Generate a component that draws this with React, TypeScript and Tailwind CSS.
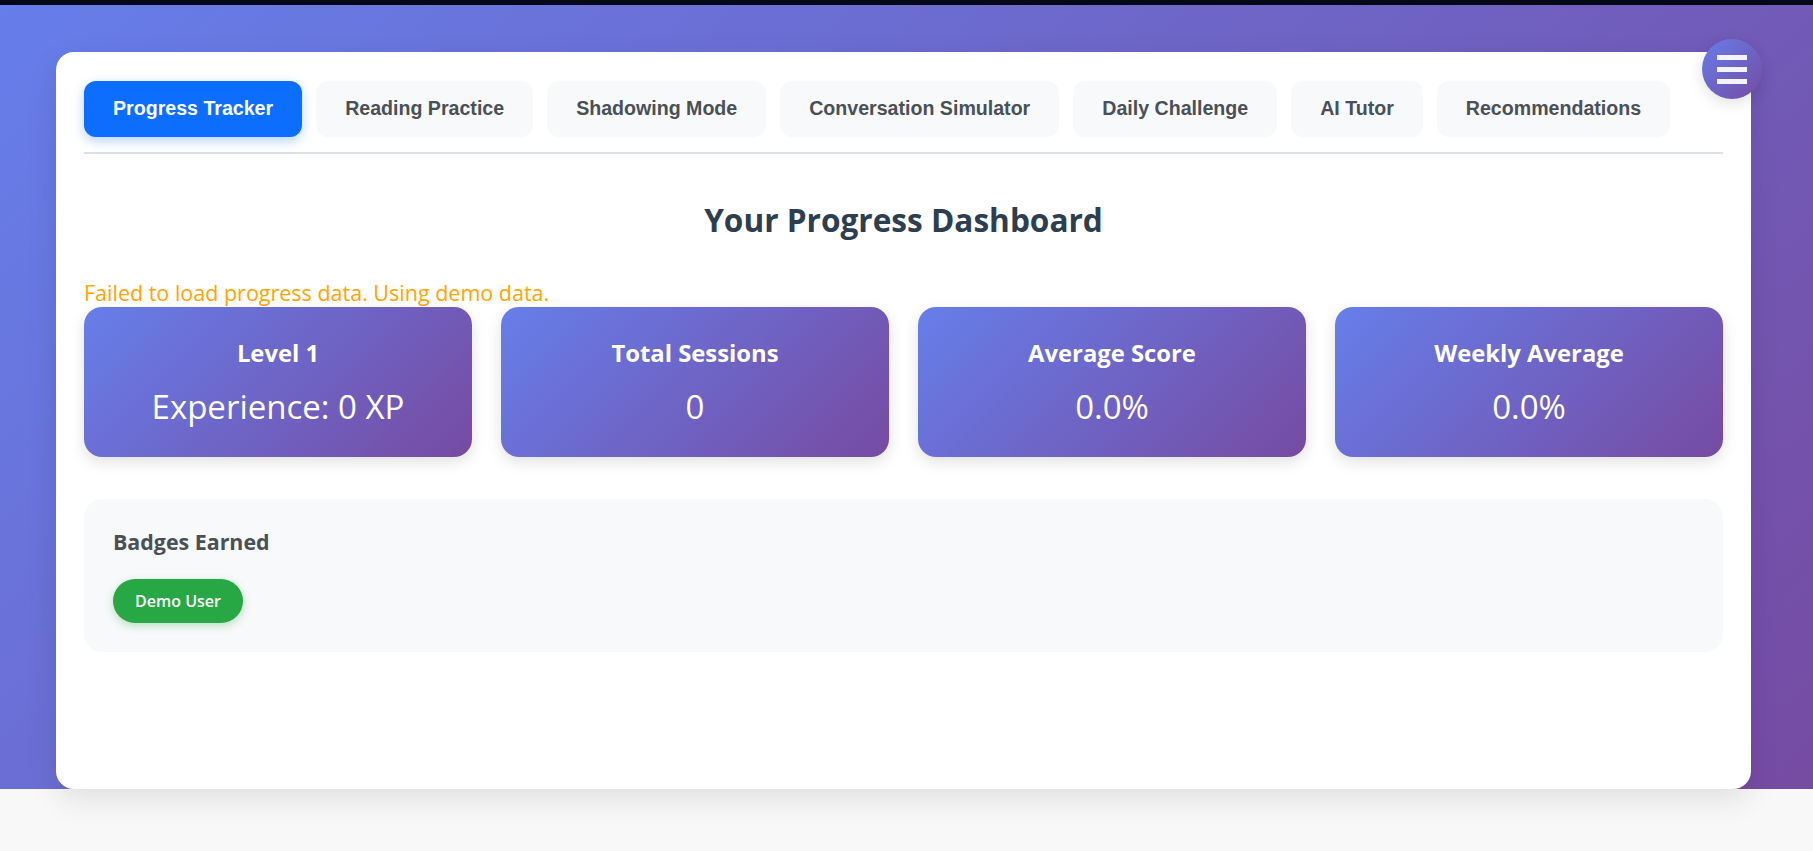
import React from "react";

const tabs = [
  "Progress Tracker",
  "Reading Practice",
  "Shadowing Mode",
  "Conversation Simulator",
  "Daily Challenge",
  "AI Tutor",
  "Recommendations",
];

const stats = [
  { title: "Level 1", value: "Experience: 0 XP" },
  { title: "Total Sessions", value: "0" },
  { title: "Average Score", value: "0.0%" },
  { title: "Weekly Average", value: "0.0%" },
];

const StatCard = ({ title, value }: { title: string; value: string }) => (
  <div className="h-[150px] rounded-[18px] bg-[linear-gradient(135deg,#667eea_0%,#764ba2_100%)] text-white text-center pt-[30px] shadow-[0_5px_15px_rgba(0,0,0,0.12)]">
    <h3 className="text-[23.8px] leading-[32px] font-bold">{title}</h3>
    <p className="mt-[16px] text-[33px] leading-[44px]">{value}</p>
  </div>
);

export default function App() {
  const active = 0;

  return (
    <div className="relative min-h-screen bg-[#f8f8f8] font-['Open_Sans',sans-serif]">
      <div className="h-[5px] bg-[#050816]" />
      <div className="bg-[linear-gradient(135deg,#667eea_0%,#764ba2_100%)] pt-[47px] pl-[56px]">
        <div className="w-[1695px] h-[737px] bg-white rounded-[18px] shadow-[0_10px_30px_rgba(0,0,0,0.1)] px-[28px] pt-[29px]">
          <nav className="flex gap-[14px] pb-[15px] border-b-2 border-[#dee2e6]">
            {tabs.map((t, i) => (
              <button
                key={t}
                className={
                  i === active
                    ? "h-[56px] px-[29px] rounded-[12px] bg-[#0d6efd] text-white text-[19.6px] font-bold font-['Liberation_Sans',Arial,sans-serif] shadow-[0_4px_12px_rgba(13,110,253,0.3)]"
                    : "h-[56px] px-[29px] rounded-[12px] bg-[#f8f9fa] text-[#495057] text-[19.6px] font-bold font-['Liberation_Sans',Arial,sans-serif]"
                }
              >
                {t}
              </button>
            ))}
          </nav>

          {/* progress view */}
          <h2 className="mt-[46px] text-center text-[31.6px] leading-[40px] font-bold text-[#2c3e50]">
            Your Progress Dashboard
          </h2>

          <p className="mt-[39px] text-[21.5px] leading-[28px] text-[#ffa500]">
            Failed to load progress data. Using demo data.
          </p>

          <div className="grid grid-cols-4 gap-[29px]">
            {stats.map((s) => (
              <StatCard key={s.title} title={s.title} value={s.value} />
            ))}
          </div>

          <div className="mt-[42px] rounded-[18px] bg-[#f8f9fa] px-[29px] pt-[29px] pb-[29px]">
            <h4 className="text-[21.4px] leading-[28px] font-bold text-[#495057]">Badges Earned</h4>
            <div className="mt-[23px] flex gap-2">
              <span className="h-[44px] px-[22px] inline-flex items-center rounded-full bg-[#28a745] text-white text-[16px] font-semibold shadow-[0_3px_8px_rgba(40,167,69,0.3)]">
                Demo User
              </span>
            </div>
          </div>
        </div>
      </div>

      <button className="absolute top-[39px] right-[51px] w-[60px] h-[60px] rounded-full bg-[linear-gradient(135deg,#667eea_0%,#764ba2_100%)] shadow-[0_4px_15px_rgba(0,0,0,0.12)] flex flex-col items-center justify-center gap-[7px]">
        <span className="block w-[30px] h-[5px] bg-[#f3f3ff]" />
        <span className="block w-[30px] h-[5px] bg-[#f3f3ff]" />
        <span className="block w-[30px] h-[5px] bg-[#f3f3ff]" />
      </button>
    </div>
  );
}
